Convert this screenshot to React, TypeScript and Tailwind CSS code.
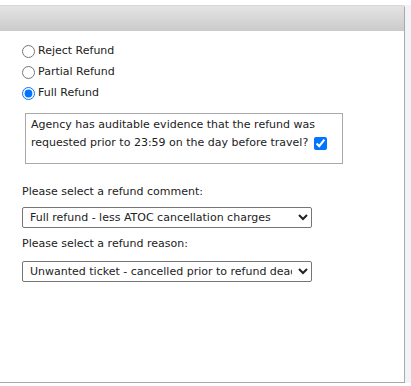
import { useState } from "react";

const OPTIONS = ["Reject Refund", "Partial Refund", "Full Refund"];

export default function App() {
  const [choice, setChoice] = useState("Full Refund");
  const [evidence, setEvidence] = useState(true);

  return (
    <div className="w-[411px] h-[386px] bg-white flex overflow-hidden" style={{ fontFamily: '"DejaVu Sans", Verdana, sans-serif' }}>
      <div className="w-[405px] h-[378px] mt-[5px] flex flex-col border-r border-b border-[#a9a9a9] rounded-tr-[3px]">
        <div className="h-[26px] bg-gradient-to-b from-[#e4e4e4] to-[#cbcbcb] border-t border-[#d6d6d6] rounded-tr-[3px] shrink-0" />

        <div className="pl-[22px] pt-[11px] text-[11px] text-[#222]">
          <div className="flex flex-col gap-[3px]">
            {OPTIONS.map((o) => (
              <label key={o} className="flex items-center h-[18px]">
                <input
                  type="radio"
                  name="refund"
                  checked={choice === o}
                  onChange={() => setChoice(o)}
                  className="w-[13px] h-[13px] m-0 mr-[3px] accent-[#0075ff]"
                />
                <span>{o}</span>
              </label>
            ))}
          </div>

          <div className="mt-[11px] ml-[3px] w-[318px] h-[51px] border border-[#a9a9a9] px-[5px] pt-[2px] leading-[18px]">
            <div>Agency has auditable evidence that the refund was</div>
            <div className="flex items-center">
              requested prior to 23:59 on the day before travel?
              <input
                type="checkbox"
                checked={evidence}
                onChange={(e) => setEvidence(e.target.checked)}
                className="w-[13px] h-[13px] ml-[6px] m-0 accent-[#0075ff]"
              />
            </div>
          </div>

          <div className="mt-[21px] leading-[14px]">Please select a refund comment:</div>
          <select className="mt-[8px] w-[290px] h-[21px] border border-[#767676] rounded-[2px] px-[3px] text-[11px] bg-white">
            <option>Full refund - less ATOC cancellation charges</option>
          </select>

          <div className="mt-[9px] leading-[14px]">Please select a refund reason:</div>
          <select className="mt-[10px] w-[290px] h-[21px] border border-[#767676] rounded-[2px] px-[3px] text-[11px] bg-white">
            <option>Unwanted ticket - cancelled prior to refund deadline</option>
          </select>
        </div>
      </div>
      <div className="flex-1 h-[378px] mt-[5px] bg-[#f2f3f7]" />
    </div>
  );
}
